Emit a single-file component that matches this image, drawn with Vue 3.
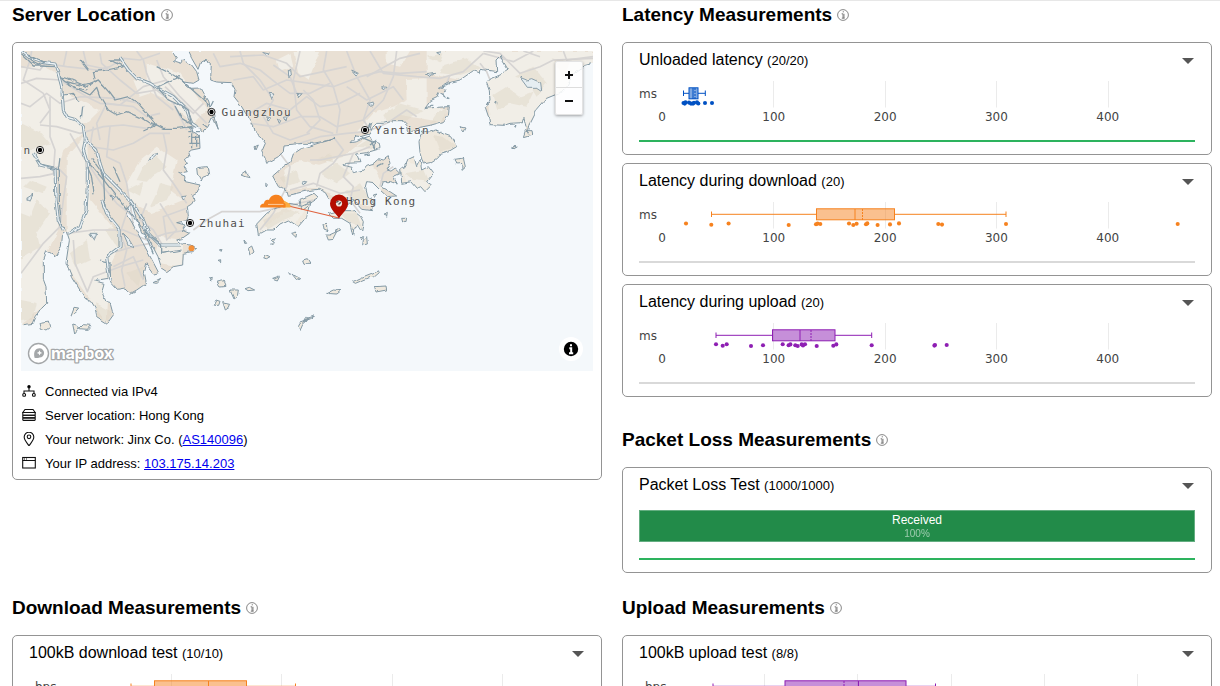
<script setup>
const TICKS = [100, 200, 300, 400]
const msGrid = [773.5, 885.5, 996.5, 1108.5]
const charts = {
  unloaded: {
    origin: 639, unit: 'ms', unitX: 639, color: '#0051c3', grid: msGrid, labels: true,
    low: 683.5, q1: 689, median: 693, mean: 695, q3: 698, high: 705.3,
    dots: [[683.5, 103], [684.7, 103.6], [685.5, 102.4], [689, 102.6], [691, 103.6], [693, 103.6], [694, 102.8], [697, 102.4], [698.3, 103.5], [705, 103], [712, 103]],
  },
  download: {
    origin: 639, unit: 'ms', unitX: 639, color: '#f6821f', grid: msGrid, labels: true,
    low: 711.5, q1: 816.5, median: 855, mean: 862.5, q3: 894.5, high: 1006,
    dots: [[686, 102.5], [711.3, 103.7], [728.6, 102.5], [788.7, 104], [816, 103.3], [817.6, 102.6], [820.3, 103], [849, 102.5], [853.3, 104], [856.6, 102.8], [866, 103.2], [867.3, 102.4], [877.6, 104], [890, 103.4], [899, 102.4], [938.3, 103], [942, 103.6], [1006, 103], [1177.7, 103]],
  },
  upload: {
    origin: 639, unit: 'ms', unitX: 639, color: '#8e1fb3', grid: msGrid, labels: true,
    low: 716, q1: 772.5, median: 800, mean: 811, q3: 835, high: 871.7,
    dots: [[716, 102.3], [722.7, 103.8], [726.7, 102.3], [751, 104], [763, 103.2], [782.7, 102.3], [788.6, 103.2], [790.4, 102.4], [795.3, 103.2], [797.7, 104], [801.7, 102.4], [803, 103.4], [805, 102.3], [816.7, 104], [833.3, 103.7], [836.3, 102.4], [871.7, 103.2], [934.4, 103.6], [935, 103], [946.7, 103]],
  },
  down100: {
    origin: 29, unit: 'bps', unitX: 35, color: '#f6821f', grid: [171.5, 281.5, 392.5, 502.5], labels: false,
    low: 131, q1: 154.5, median: 208.5, mean: 208.5, q3: 246.5, high: 295.5, dots: [],
  },
  up100: {
    origin: 639, unit: 'bps', unitX: 645, color: '#8e1fb3', grid: [764.5, 857.5, 951.5, 1044.5, 1137.5], labels: false,
    low: 713, q1: 785, median: 858.5, mean: 844, q3: 906, high: 935.5, dots: [],
  },
}
const sections = [
  { area: 'latency', title: 'Latency Measurements', cards: [
    { name: 'Unloaded latency', count: '(20/20)', chart: charts.unloaded, done: true },
    { name: 'Latency during download', count: '(20)', chart: charts.download },
    { name: 'Latency during upload', count: '(20)', chart: charts.upload },
  ] },
  { area: 'loss', title: 'Packet Loss Measurements', cards: [
    { name: 'Packet Loss Test', count: '(1000/1000)', chart: null, done: true },
  ] },
  { area: 'down', title: 'Download Measurements', cards: [
    { name: '100kB download test', count: '(10/10)', chart: charts.down100, done: true },
  ] },
  { area: 'up', title: 'Upload Measurements', cards: [
    { name: '100kB upload test', count: '(8/8)', chart: charts.up100, done: true },
  ] },
]

// Map geometry is drawn on a grid of three units per pixel.
const westLand = 'M63 153H515L530 175 520 182 545 190 552 178 575 195 590 215 597 240 580 250 548 245 570 265 603 264 612 280 626 303 630 318 640 332 655 388 638 350 628 372 624 380 608 398 592 378 575 382 563 383 598 405 600 445 575 450 566 456 570 470 556 476 562 492 552 500 562 515 536 520 558 530 556 545 600 555 592 576 578 584 582 600 575 612 562 620 565 645 560 662 530 668 555 675 545 690 568 700 545 716 530 720 545 732 575 735 590 745 575 755 550 760 548 795 520 800 500 815 485 805 474 770 440 705 425 700 404 640 396 610 380 640 400 675 455 778 476 818 462 822 437 790 430 820 436 852 410 870 392 880 375 864 352 868 332 846 330 790 324 800 325 835 282 842 312 850 305 875 318 905 330 908 336 930 340 945 322 970 290 950 285 925 272 905 255 895 215 830 198 788 208 722 198 692 188 700 184 740 165 770 140 755 130 780 130 838 138 860 140 910 125 925 108 950 100 970 63 975Z'
const eastLand = 'M565 153H1779V190L1756 196 1720 222 1700 262 1688 275 1640 295 1612 328 1590 372 1584 400 1578 380 1572 352 1566 368 1530 370 1512 376 1470 374 1466 352 1456 322 1470 300 1468 272 1460 250 1470 238 1500 225 1525 210 1500 168 1488 180 1490 215 1470 212 1440 208 1438 218 1420 212 1380 240 1340 250 1318 262 1338 268 1328 282 1336 292 1316 278 1312 292 1292 302 1275 325 1310 322 1348 320 1345 345 1330 365 1290 376 1260 382 1240 394 1228 402 1222 378 1206 362 1180 362 1150 370 1130 370 1118 382 1108 402 1082 410 1068 408 1050 428 1070 425 1092 414 1110 408 1118 424 1138 430 1140 446 1100 458 1070 462 1080 488 1040 490 1030 496 1056 502 1060 518 1090 510 1100 496 1120 490 1136 476 1150 480 1165 470 1170 490 1158 510 1172 514 1186 504 1202 520 1180 530 1192 552 1172 545 1150 545 1145 560 1170 575 1190 588 1162 590 1140 570 1118 548 1100 545 1096 560 1104 592 1120 600 1115 632 1085 628 1060 600 1042 615 1020 600 1000 612 986 596 976 578 955 568 915 574 890 580 862 586 858 572 835 560 818 528 850 500 872 485 880 462 905 445 930 438 990 420 1002 415 980 422 940 430 910 430 852 435 850 455 835 470 800 490 795 474 785 455 796 430 784 412 765 395 762 378 740 345 722 315 702 290 705 268 694 248 650 246 632 240 634 190 618 178 602 186 594 208 575 175Z'
const islands = [
  'M1265 393L1290 396 1310 390 1330 402 1352 410 1370 440 1350 452 1322 460 1310 475 1290 488 1270 492 1260 460 1257 425Z',
  'M770 672L800 640 820 628 860 612 900 618 930 605 920 650 895 680 865 660 840 672 822 690 800 690 775 704Z',
  'M985 640L1020 632 1060 632 1082 650 1090 665 1085 695 1072 675 1062 680 1058 705 1050 670 1025 655 1000 655Z',
  'M900 598L920 590 942 580 955 592 935 605 905 628Z',
  'M1202 505L1215 500 1225 478 1242 470 1250 500 1260 480 1265 510 1285 500 1300 520 1280 545 1295 555 1275 575 1262 560 1252 565 1235 545 1205 550Z',
  'M590 503L622 500 626 525 608 532 604 543 592 522Z', 'M723 525L738 514 748 533 735 530Z',
  'M652 846L672 842 678 856 660 858Z', 'M690 870L715 870 712 890 702 897Z', 'M668 905L692 910 688 922 676 930Z',
  'M640 916L648 900 660 904 656 916Z', 'M745 745L755 738 762 756 750 766Z', 'M788 774L796 764 810 770 800 776Z',
  'M120 970L148 966 152 980 138 990 124 985Z', 'M218 972L226 974 240 984 250 974 272 976 262 988 238 986 224 1002Z',
  'M212 948L222 922 236 924 226 936Z', 'M462 848L482 838 472 850Z', 'M908 780L922 776 930 790 912 790Z',
  'M1124 860L1158 858 1160 870 1128 876Z', 'M1058 845L1085 832 1135 812 1138 818 1124 830 1100 836 1066 850Z',
  'M980 880L1000 870 1020 872 1008 882Z', 'M976 705L988 705 1010 695 998 718 982 720Z', 'M969 672L982 670 984 695 972 690Z',
  'M1090 720L1100 710 1102 732 1088 735Z', 'M1078 712L1088 713 1084 720Z', 'M1365 478L1390 474 1396 500 1386 508 1385 490 1370 492Z',
  'M1380 380L1398 384 1392 396Z', 'M1535 445L1548 436 1545 446Z', 'M1576 392L1596 392 1598 402 1570 410Z',
  'M895 980L900 970 922 962 908 974 900 992Z', 'M914 962L920 952 928 956Z', 'M912 964L924 954 944 948 932 956Z', 'M1205 655L1220 655 1218 668 1208 666Z',
  'M875 700L890 696 888 712Z', 'M1008 696L1014 682 1022 690Z', 'M818 835L838 828 832 840Z', 'M876 822L890 830 902 836 892 842Z',
  'M866 818L874 820 870 824Z', 'M735 866L748 862 764 870 744 872Z', 'M626 834L634 832 632 846Z', 'M658 750L666 746 664 754Z', 'M654 784L662 782 662 788Z',
  'M732 720L740 730 734 730Z', 'M815 716L826 714 822 722Z', 'M812 730L824 728 820 736Z', 'M797 550L803 555 798 557Z', 'M765 440L775 435 768 450Z',
  'M1455 310L1462 306 1460 312Z', 'M1487 306L1491 304 1490 310Z', 'M1542 378L1548 376 1546 382Z', 'M1120 585L1130 582 1126 594Z', 'M1155 642L1162 640 1160 652Z',
]
const lightPatches = [
  'M63 200L135 200 190 230 180 300 250 340 250 400 190 450 170 520 175 690 130 780 140 910 63 975Z',
  'M190 280L240 300 300 330 260 370 200 350Z', 'M440 190L540 220 620 330 580 370 500 300 440 270Z',
  'M400 240L450 250 450 280 420 290Z', 'M200 470L260 400 270 600 320 660 370 720 330 800 320 970 200 800Z',
  'M420 480L470 440 530 480 510 570 550 600 450 640 390 600 380 550Z', 'M380 640L460 780 480 710 550 720 545 800 480 790Z',
  'M880 153H960L925 240 895 220Z', 'M830 180L870 160 880 200 840 215Z', 'M1160 153H1230L1200 200 1160 190Z',
  'M1280 153H1779V280L1640 290 1580 380 1470 372 1460 250 1380 240 1280 220Z', 'M1218 240L1280 238 1280 320 1345 330 1320 365 1200 345 1150 380 1070 395 1120 340 1180 320 1220 300Z',
  'M1030 470L1140 380 1150 440 1110 480 1150 560 1110 620 1040 600 940 560 940 500Z', 'M850 510L900 480 980 500 970 560 860 570Z',
  'M1200 480L1300 510 1280 570 1220 550Z', 'M770 700L850 640 920 620 880 680 820 690Z', 'M1000 640H1085V690L1020 660Z',
]
const hills = [
  'M63 370L125 400 150 430 90 450 63 440Z', 'M63 640L90 650 110 600 150 640 110 700 120 740 63 775Z', 'M63 900L110 910 100 955 63 960Z',
  'M70 560L90 540 140 560 130 580Z', 'M210 760L260 720 270 780 225 800Z', 'M285 910L335 935 322 965 290 945Z',
  'M430 500L470 470 500 500 460 525 440 545 410 540Z', 'M480 550L520 560 500 600 450 620 470 580Z', 'M380 570L430 545 420 590Z',
  'M315 690L360 670 355 750Z', 'M380 820L430 800 415 860Z', 'M1330 195L1400 175 1440 205 1380 225 1320 220Z', 'M1280 170L1330 160 1320 190Z',
  'M1480 285L1520 260 1560 290 1600 275 1580 320 1530 310 1495 330Z', 'M1545 230L1600 200 1640 250 1610 290 1580 240Z', 'M1655 175L1710 190 1690 230Z',
  'M1150 345L1200 310 1270 330 1220 360 1160 365Z', 'M1310 340L1345 325 1330 360 1290 370Z', 'M1300 405L1330 410 1370 440 1320 455Z',
  'M1070 440L1110 415 1130 445Z', 'M960 520L1010 490 1050 520 1010 550Z', 'M1030 580L1080 550 1110 600 1060 600Z', 'M840 535L890 510 900 545 860 560Z',
  'M1215 520L1270 510 1285 545 1240 540Z', 'M790 660L860 625 900 640 850 660 800 690Z', 'M1020 640L1070 640 1085 680 1045 665Z', 'M950 480L990 460 1000 490Z',
]
const roads = [
  'M63 200L120 210 135 190 200 200 290 210 330 200 370 175 420 180 480 160', 'M63 250L110 235 180 240 260 290 300 310 360 315 430 260 500 240',
  'M63 310L90 320 140 280 180 310 240 290 350 295 420 310', 'M95 153L90 180 70 240 130 280 150 330 120 370', 'M200 153L190 200M250 153L260 195 330 210',
  'M300 160L305 190 360 240 410 280 470 270 520 310 560 390', 'M410 153L430 180 440 220 470 290 520 330', 'M150 290L150 410 165 450 160 520',
  'M120 375L170 380 240 400 310 380 370 375 440 385', 'M300 420L290 370 320 310 400 320 440 350 480 340', 'M280 380L270 440 340 450 400 430 450 400 510 400',
  'M330 380L320 470 360 490 380 550 395 640 400 680', 'M210 400L250 470 310 560 350 610 400 650', 'M490 400L500 450 490 510 520 550 560 610',
  'M63 535L120 530 165 520M170 500L200 530 190 600 180 680 130 730 63 820', 'M200 700L280 690 370 690 440 720 500 700 560 690',
  'M220 720L225 790 262 875 280 830 360 800 430 780', 'M380 640L360 700 380 750 365 810 375 860', 'M440 610L420 660 460 690 490 740M480 610L530 690 500 720 490 650 560 625',
  'M330 760L400 740 450 730M340 800L400 770 430 840', 'M470 180L490 230 540 290 590 340 620 370', 'M495 260L580 340 610 310',
  'M580 690L620 660 665 635 780 635 850 620 940 600', 'M780 690L820 640 860 560 870 500 840 460',
  'M640 160L660 200 720 190 780 210 830 250 870 280 930 280 990 250', 'M720 153L730 190 780 240 820 300 790 350 820 400 870 420 930 400',
  'M690 170L790 165 860 190 900 230 970 215 1040 200', 'M700 240L760 230 790 270 860 240 930 250 1000 260 1080 230 1140 215 1200 220 1280 215',
  'M740 345L800 310 870 330 920 290 960 320 1020 310 1080 280', 'M750 370L820 380 900 350 960 350 1010 380 1090 360 1150 300 1180 230 1190 153',
  'M900 153L880 240 890 330 930 380 1000 400', 'M980 153L970 210 1000 260 1020 330 1010 400', 'M1040 153L1070 230 1110 300 1090 360 1110 390', 'M1110 153L1150 220 1250 230 1320 235 1390 215 1450 160',
  'M1100 230L1200 175 1260 160M1210 300L1180 260 1100 300 1040 260', 'M920 400L960 360 940 300 910 270', 'M900 430L960 410 1040 400 1100 395 1160 370 1220 330 1250 350',
  'M1450 153L1500 160 1560 220 1620 200 1660 180 1779 175', 'M1450 160L1540 185 1600 153M1570 153L1620 170M1690 153L1700 180 1779 170',
  'M1470 240L1460 215 1440 190M1000 410L1030 450 1000 490 960 520 950 560', 'M1060 460L1030 530 1060 560 1050 600 1080 640', 'M930 480L960 480 1060 460 1110 440',
  'M870 570L940 550 1020 580 1080 570M1140 560L1150 520 1180 500', 'M1350 225L1340 250M820 195L870 230 890 280',
]
const mainRivers = [
  'M63 153L90 175 125 187 165 192 175 222 185 260 190 330 202 352 230 360 250 380 256 420 250 450 262 490 262 560 258 630 240 680 205 700',
  'M360 175L385 210 410 235 450 250 475 265 520 290 560 330 575 370 590 380',
  'M256 420L290 450 300 490 310 520 350 560 390 600 430 660 445 700 480 735 540 735',
  'M100 460L120 495 165 505 168 600 175 660 190 690',
  'M305 600L320 640 360 690 360 740 320 770 325 810 330 840',
]
const rivers = [
  'M63 163L100 198 125 198 165 200M85 165L105 175 130 188 115 195 95 185 85 165', 'M180 230L215 240 260 260 295 240 330 280 345 300 385 290 415 310 445 345 470 375',
  'M270 285L290 262 300 290 325 330 350 345 380 335 425 355 465 380', 'M200 245L240 255 270 250 295 240M220 262L260 270M180 232L195 245 240 270 270 285', 'M285 238L280 215 320 210 370 200 330 180 360 180',
  'M470 200L520 225 550 245 600 290 630 320M470 262L515 240 540 230', 'M475 265L505 300 540 315 565 330 575 375M525 318L545 355 570 370',
  'M470 375L490 385 530 385 575 380 580 400M430 393L470 375 445 345M450 365L490 385', 'M190 285L220 280 240 305M248 320L244 355',
  'M262 485L285 510 315 545 350 590 380 630M275 475L300 510 315 545', 'M262 500L275 530 282 580M310 520L315 620',
  'M110 480L130 495 178 510 178 610 185 680M180 472L175 510', 'M380 620L430 690 460 760M340 500L360 545M300 780L318 785',
  'M562 395H600M566 412H598M568 430H600M575 400V445M590 405V440M608 375L620 382', 'M430 690L485 735 485 760 545 750', 'M615 290L620 320M625 312L630 320 640 300', 'M240 180L265 212',
  'M1080 410L1115 425 1125 450M1110 370L1100 392 1115 368Z', 'M1110 435L1130 420 1120 445M1150 490L1130 500M1090 465L1110 462', 'M1340 292L1348 296M1275 325L1300 315M1325 262L1350 250',
]
const ponds = [
  'M865 210L872 208 874 225 866 230Z', 'M805 280L822 282 812 295Z', 'M890 280L905 282 898 290Z', 'M790 158L808 162 800 168Z', 'M1055 210L1075 220 1068 225Z', 'M1145 260L1158 262 1150 270Z',
  'M1105 310L1120 306 1115 318Z', 'M1103 385L1115 368 1110 388Z', 'M1275 225L1304 220 1290 230Z', 'M1310 158L1325 155 1320 164Z', 'M445 485L455 465 475 460 460 475Z', 'M80 595L100 582 90 600Z', 'M270 700L290 700 282 718Z',
  'M1560 232L1580 240 1595 236 1622 248 1625 272 1610 262 1582 262Z', 'M545 590L560 588 550 600Z', 'M905 550L920 545 910 558Z', 'M800 350L812 354 804 360Z', 'M832 356L842 362 838 370Z', 'M850 352L862 350 858 366Z', 'M370 700L385 715 400 740 385 735Z', 'M330 582L342 590 336 598Z', 'M430 670L440 690 432 695Z',
]
const places = [
  { name: 'Guangzhou', x: 211.5, y: 112, lx: 221.5 },
  { name: 'Yantian', x: 365, y: 130, lx: 375 },
  { name: 'Hong Kong', x: null, y: 201, lx: 346 },
  { name: 'Zhuhai', x: 190, y: 223, lx: 199 },
  { name: 'n', x: 40, y: 150, lx: 23.5 },
]
</script>

<template>
  <main class="page">
    <section class="block location">
      <h3>Server Location
        <svg class="hint" viewBox="0 0 12 12"><circle cx="6" cy="6" r="5.4" /><path d="M4.600 4.800H6V9.200M7 4.800V9.200M4.800 9.200H7.600M5.700 2.800H7" /></svg>
      </h3>
      <div class="card loc-card">
        <div class="map">
          <svg class="terrain" viewBox="63 153 1716 960">
            <defs>
              <filter id="rough" x="0" y="0" width="1779" height="1113" filterUnits="userSpaceOnUse">
                <feTurbulence type="fractalNoise" baseFrequency="0.04" numOctaves="2" seed="4" result="n" />
                <feDisplacementMap in="SourceGraphic" in2="n" scale="11" xChannelSelector="R" yChannelSelector="G" />
              </filter>
              <clipPath id="land"><path :d="westLand" /><path :d="eastLand" /><path v-for="d in islands" :key="d" :d="d" /></clipPath>
              <clipPath id="frame"><path d="M68 159H1773V1113H68Z" /></clipPath>
            </defs>
            <rect x="63" y="153" width="1716" height="960" fill="#f4f8fb" />
            <g filter="url(#rough)">
              <g transform="translate(0 -12)"><rect x="640" y="153" width="1150" height="20" fill="#e9e0d4" /><rect x="50" y="153" width="460" height="20" fill="#e9e0d4" /></g>
              <g fill="#e9e0d4"><path :d="westLand" /><path :d="eastLand" /></g>
              <path v-for="d in islands" :key="d" :d="d" fill="#efe9de" />
              <g clip-path="url(#land)">
                <path v-for="d in lightPatches" :key="d" :d="d" fill="#f1eee7" />
                <path v-for="d in hills" :key="d" :d="d" class="hill" />
              </g>
            </g>
            <g class="roads"><path v-for="d in roads" :key="d" :d="d" /></g>
            <g filter="url(#rough)">
              <g class="shore" clip-path="url(#frame)"><path :d="westLand" /><path :d="eastLand" /><path v-for="d in islands" :key="d" :d="d" /></g>
              <g class="rivers wide"><path v-for="d in mainRivers" :key="d" :d="d" /></g>
              <g class="rivers inner"><path v-for="d in mainRivers" :key="d" :d="d" /></g>
              <g class="rivers"><path v-for="d in rivers" :key="d" :d="d" /></g>
              <g class="ponds"><path v-for="d in ponds" :key="d" :d="d" /></g>
            </g>
          </svg>
          <svg class="overlay" viewBox="21 51 572 320">
            <g v-for="p in places" :key="p.name">
              <g v-if="p.x"><circle :cx="p.x" :cy="p.y" r="3.6" fill="#fff" stroke="#222" stroke-width="1" /><circle :cx="p.x" :cy="p.y" r="2.2" fill="#000" /></g>
              <text class="place" :x="p.lx" :y="p.y + 4">{{ p.name }}</text>
            </g>
            <path d="M276 203L339 218" stroke="#df633f" stroke-width="1.2" />
            <path d="M283 207.500C283 203 284.500 201 287 202.500C290 203 291 205 290.500 207.500Z" fill="#fbad41" />
            <path d="M260 207.500C260 204.500 262 203.500 264 203.500C264 200.500 267 199 269 200C271 193.500 281 192.500 283.500 200C285 201.500 286 204 285.500 207.500Z" fill="#f6821f" />
            <path d="M268 204.400H283.500" stroke="#ffd2a8" stroke-width=".9" /><path d="M284 201.500L289 205" stroke="#fbad41" stroke-width="2" />
            <circle cx="191.500" cy="248.200" r="2.900" fill="#f6821f" opacity=".85" />
            <path d="M339 218.500C336 213 330 209.500 330 203.500A9 9 0 0 1 348 203.500C348 209.500 342 213 339 218.500Z" fill="#b40c00" />
            <circle cx="339" cy="203.500" r="3.100" fill="#eee5de" /><path d="M336.300 202.500L338.500 201M338.500 204.500L340.800 202.300" stroke="#555" stroke-width="1.400" />
            <circle cx="38.500" cy="353.500" r="10" fill="#fff" stroke="#a4a7a9" stroke-width="1.400" />
            <path d="M34.500 357.800C33 351 36 348.300 39.500 348.300A4.600 4.600 0 0 1 39.500 357.500C38 358.200 36 358.200 34.500 357.800Z" fill="#a4a7a9" />
            <path d="M39.500 350.200L40.300 352.100 42.200 352.900 40.300 353.700 39.500 355.600 38.700 353.700 36.800 352.900 38.700 352.100Z" fill="#fff" />
            <text class="wordmark" x="51" y="358.500" textLength="62">mapbox</text>
            <circle cx="571" cy="349" r="12" fill="#fff" /><circle cx="571" cy="349" r="7.200" fill="#000" />
            <path d="M571 344.300V346.300M569.300 348.200H571.200V353M569 353.200H573.200" stroke="#fff" stroke-width="2" fill="none" />
          </svg>
          <div class="zoomer">
            <div><svg viewBox="0 0 10 10"><path d="M5 1V9M1 5H9" /></svg></div>
            <div><svg viewBox="0 0 10 10"><path d="M1 5H9" /></svg></div>
          </div>
        </div>
        <ul class="facts">
          <li><svg viewBox="0 0 14 14"><circle cx="7" cy="2.700" r="1.700" fill="#000" stroke="none" /><path d="M7 3V7M2 9V7H12V9" /><rect x=".8" y="9.500" width="2.700" height="2.700" rx="1" /><rect x="10.500" y="9.500" width="2.700" height="2.700" rx="1" /></svg>Connected via IPv4</li>
          <li><svg viewBox="0 0 14 14"><path d="M.8 4.500L3 1.500H11L13.200 4.500Z" /><rect x=".8" y="4.500" width="12.400" height="2.700" rx=".6" /><rect x=".8" y="7.200" width="12.400" height="2.700" rx=".6" /><rect x=".8" y="9.900" width="12.400" height="2.500" rx=".6" /></svg>Server location: Hong Kong</li>
          <li><svg viewBox="0 0 14 14"><path d="M7 13.800C5 10.800 2.200 8.200 2.200 5A4.800 4.800 0 0 1 11.800 5C11.800 8.200 9 10.800 7 13.800Z" /><circle cx="7" cy="4.800" r="1.800" /></svg>Your network: Jinx Co. (<a>AS140096</a>)</li>
          <li><svg viewBox="0 0 14 14"><rect x=".7" y="1.500" width="12.600" height="10.500" /><path d="M.7 4.500H13.300M2 3H3M4 3H5" /></svg>Your IP address:&nbsp;<a>103.175.14.203</a></li>
        </ul>
      </div>
    </section>

    <section v-for="s in sections" :key="s.area" class="block" :class="s.area">
      <h3>{{ s.title }}
        <svg class="hint" viewBox="0 0 12 12"><circle cx="6" cy="6" r="5.4" /><path d="M4.600 4.800H6V9.200M7 4.800V9.200M4.800 9.200H7.600M5.700 2.800H7" /></svg>
      </h3>
      <div v-for="c in s.cards" :key="c.name" class="card test">
        <header><span>{{ c.name }} <small>{{ c.count }}</small></span><svg class="caret" viewBox="0 0 12 6"><path d="M0 0H12L6 6Z" /></svg></header>
        <svg v-if="c.chart" class="chart" :viewBox="`${c.chart.origin} 77 556 63`">
          <path v-for="g in c.chart.grid" :key="g" :d="`M${g} 81V107.500`" stroke="#ebebeb" />
          <text :x="c.chart.unitX" y="98">{{ c.chart.unit }}</text>
          <g v-if="c.chart.labels">
            <text x="662" y="121" text-anchor="middle">0</text>
            <text v-for="(t, i) in TICKS" :key="t" :x="662.4 + (i + 1) * 111.35" y="121" text-anchor="middle">{{ t }}</text>
          </g>
          <g :stroke="c.chart.color" fill="none" stroke-width="1">
            <path :d="`M${c.chart.low} 93.300H${c.chart.q1}M${c.chart.q3} 93.300H${c.chart.high}M${c.chart.low} 90.500V96M${c.chart.high} 90.500V96`" />
            <rect :x="c.chart.q1" y="87.800" :width="c.chart.q3 - c.chart.q1" height="11" :fill="c.chart.color" fill-opacity=".5" />
            <path :d="`M${c.chart.median} 88V99`" />
            <path :d="`M${c.chart.mean} 88V99`" stroke-dasharray="2 1" />
          </g>
          <circle v-for="(d, i) in c.chart.dots" :key="i" :cx="d[0]" :cy="d[1]" r="2.050" :fill="c.chart.color" />
        </svg>
        <div v-else class="loss-wrap"><div class="loss-bar"><span>Received</span><em>100%</em></div></div>
        <div class="progress" :class="{ done: c.done }"></div>
      </div>
    </section>
  </main>
</template>

<style>
body { overflow: hidden; background: #fff; }
</style>
<style scoped>
.page {
  box-sizing: border-box; width: 1220px; height: 686px; overflow: hidden;
  border-top: 1px solid #e7e7e7; padding: 3px 8px 0 12px;
  display: grid; grid-template-columns: 590px 590px; column-gap: 20px; align-content: start;
  grid-template-areas: 'location latency' 'location loss' 'down up';
  font-family: 'Liberation Sans', Arial, sans-serif; color: #000;
}
.location { grid-area: location; }
.latency { grid-area: latency; }
.loss { grid-area: loss; margin-top: 32px; }
.down { grid-area: down; margin-top: 24px; }
.up { grid-area: up; margin-top: 24px; }
h3 { margin: 0 0 16px; height: 22px; line-height: 22px; font-size: 19px; font-weight: 700; display: flex; align-items: center; gap: 5px; }
.hint { width: 12px; height: 12px; fill: none; stroke: #555; stroke-width: .7; }
.card { box-sizing: border-box; border: 1px solid #949494; border-radius: 5px; background: #fff; }
.loc-card { padding: 8px; height: 438px; }
.map { position: relative; width: 572px; height: 320px; overflow: hidden; }
.terrain, .overlay { position: absolute; inset: 0; width: 572px; height: 320px; }
.hill { fill: #dfd8c8; opacity: .5; }
.shore { fill: none; stroke: #8399a5; stroke-width: 3; stroke-linejoin: round; }
.roads { fill: none; stroke: #d6d4d3; stroke-width: 5; stroke-linejoin: round; }
.rivers { fill: none; stroke: #869da9; stroke-width: 3.8; stroke-linejoin: round; }
.rivers.wide { stroke-width: 9.500; }
.rivers.inner { stroke: #edf3f6; stroke-width: 4; }
.ponds { fill: #e6eef2; stroke: #8399a5; stroke-width: 2.8; }
.place { font: 11px 'DejaVu Sans Mono', monospace; letter-spacing: 1.2px; fill: #505050; paint-order: stroke; stroke: rgba(255, 255, 255, .4); stroke-width: 1px; }
.wordmark { font: 700 16.500px Inter, sans-serif; fill: #fff; paint-order: stroke; stroke: #a4a7a9; stroke-width: 2.6px; stroke-linejoin: round; }
.zoomer { position: absolute; right: 10px; top: 10px; width: 28px; height: 54px; box-sizing: border-box; border: 1px solid #e3e3e3; border-radius: 2px; background: rgba(255, 255, 255, .85); box-shadow: 0 1px 3px rgba(0, 0, 0, .35); }
.zoomer div { height: 26px; box-sizing: border-box; display: flex; align-items: center; justify-content: center; }
.zoomer div:first-child { height: 25px; padding-top: 1px; }
.zoomer div + div { border-top: 1px solid #ddd; }
.zoomer svg { width: 10px; height: 10px; stroke: #111; stroke-width: 2; }
.facts { list-style: none; margin: 8px 0 0; padding: 0; font-size: 13px; }
.facts li { height: 24px; display: flex; align-items: center; }
.facts svg { width: 14px; height: 14px; margin: 0 9px 0 1px; fill: none; stroke: #111; stroke-width: 1.1; }
.facts a { color: #0000ee; text-decoration: underline; }
.test { padding: 0 16px 12px; }
.test + .test { margin-top: 8px; }
header { height: 34px; display: flex; align-items: center; justify-content: space-between; font-size: 16px; }
small { font-size: 13px; }
.caret { width: 12px; height: 6px; margin: 2px 1px 0 0; fill: #555; }
.chart { display: block; width: 556px; height: 63px; }
.chart text { font: 12px 'DejaVu Sans', sans-serif; fill: #444; }
.progress { height: 2px; background: #d9d9d9; }
.progress.done { background: #2db35e; }
.loss-wrap { height: 56px; padding-top: 8px; box-sizing: border-box; }
.loss-bar { box-sizing: border-box; height: 32px; border: 1px solid #64ae81; background: #228b49; color: #fff; display: flex; flex-direction: column; align-items: center; padding-top: 3px; }
.loss-bar span { font-size: 12px; line-height: 13px; }
.loss-bar em { font-style: normal; font-size: 10px; line-height: 13px; opacity: .55; }
</style>
